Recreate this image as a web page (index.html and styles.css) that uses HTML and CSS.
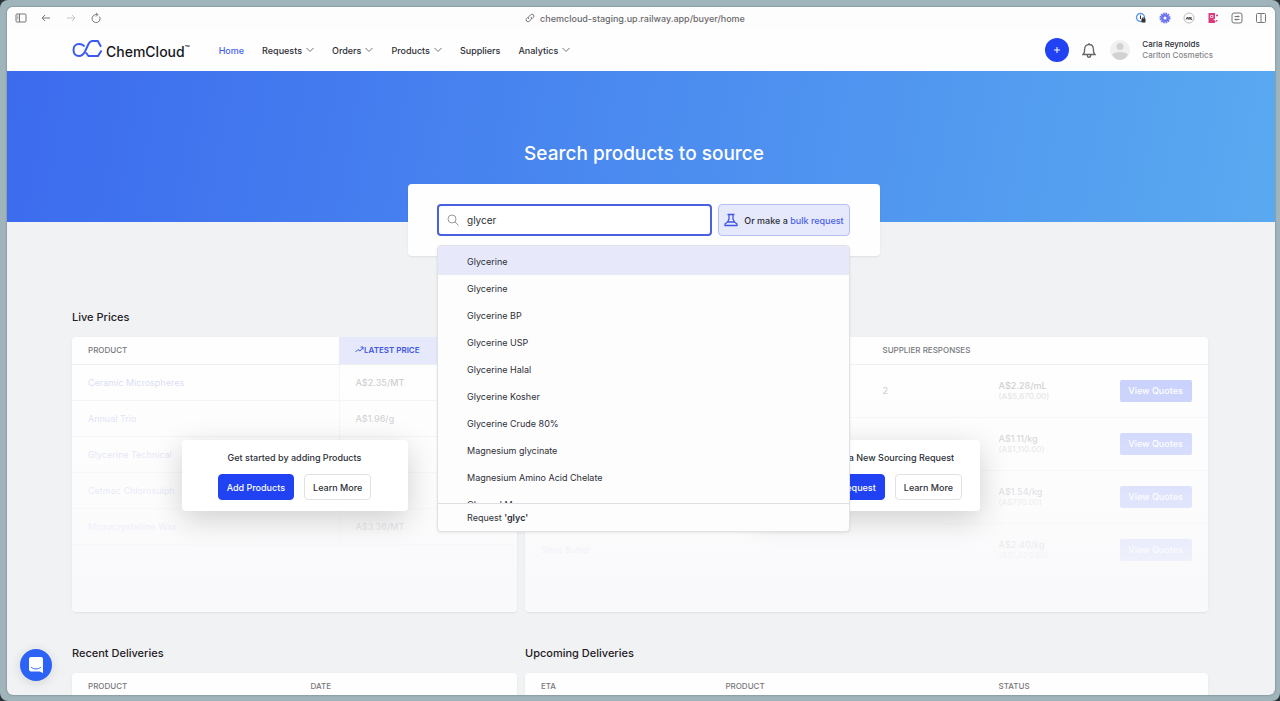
FILE: index.html
```html
<!DOCTYPE html>
<html lang="en">
<head>
    <meta charset="utf-8">
    <title>ChemCloud</title>
    <link rel="stylesheet" href="styles.css">
</head>
<body>
<div class="desktop">
<div class="window">

    <!-- Browser toolbar -->
    <div class="toolbar">
        <div class="toolbar-left">
            <button type="button" class="tool" aria-label="Sidebar"><svg width="12" height="12" viewBox="0 0 12 12"><rect x="1" y="2" width="10" height="8" rx="1"/><path d="M4.5 2v8M2.3 4h1M2.3 5.5h1M2.3 7h1"/></svg></button>
            <button type="button" class="tool" aria-label="Back"><svg width="12" height="12" viewBox="0 0 12 12"><path d="M10 6H2M5 3L2 6l3 3"/></svg></button>
            <button type="button" class="tool tool-off" aria-label="Forward"><svg width="12" height="12" viewBox="0 0 12 12"><path d="M2 6h8M7 3l3 3-3 3"/></svg></button>
            <button type="button" class="tool" aria-label="Reload"><svg width="12" height="12" viewBox="0 0 12 12"><path d="M9.6 4.7A4 4 0 1 1 6 2.6h1.6M6 .8l1.9 1.8L6 4.5"/></svg></button>
        </div>
        <div class="address">
            <svg width="10" height="10" viewBox="0 0 10 10"><path d="M4 6.200a2 2 0 0 1 0-2.800l1.600-1.600a1.900 1.900 0 0 1 2.700 2.700L7 5.800M6 3.800a2 2 0 0 1 0 2.800L4.400 8.200a1.900 1.900 0 0 1-2.700-2.700L3 4.200"/></svg>
            <span>chemcloud-staging.up.railway.app/buyer/home</span>
        </div>
        <div class="toolbar-right">
            <button type="button" class="tool" aria-label="Password manager"><svg width="12" height="12" viewBox="0 0 12 12"><circle cx="5.500" cy="5.500" r="4" stroke="#5b9be8" stroke-width="1.400"/><path d="M5.500 3.500v3.500" stroke="#333"/><rect x="6.500" y="7" width="4" height="3.500" fill="#333" stroke="none"/><path d="M7.400 7V6h2.200v1" stroke="#333"/></svg></button>
            <button type="button" class="tool" aria-label="Extension"><svg width="12" height="12" viewBox="0 0 12 12"><circle cx="6" cy="6" r="4.600" stroke="#6a74ee" stroke-width="1.800" stroke-dasharray="1.600 .8"/><circle cx="6" cy="6" r="2.800" stroke="#6a74ee" stroke-width="2.400"/></svg></button>
            <button type="button" class="tool" aria-label="Extension"><svg width="12" height="12" viewBox="0 0 12 12"><circle cx="6" cy="6" r="5" stroke="#bbb"/><path d="M3 7.500l1.300-2.500.8 2.500L6.200 5 7 7.500 8 5v2.500h1.200" stroke="#555"/></svg></button>
            <button type="button" class="tool" aria-label="Extension"><svg width="12" height="12" viewBox="0 0 12 12"><path d="M1.500 1h6.500v6H6l2 1.500V11H1.500z" fill="#d93b7c" stroke="none"/><path d="M3.500 3.500h2.500v2H3.500z" stroke="#f7c4da"/><path d="M9 3.500h2M8.500 9.500l1.800-1.300" stroke="#d93b7c" stroke-width="1.400"/></svg></button>
            <button type="button" class="tool" aria-label="Reader"><svg width="12" height="12" viewBox="0 0 12 12"><rect x="1" y="1" width="10" height="10" rx="2"/><path d="M3.500 4.500h5M3.500 7.500h5M7 3.500v2M5 6.500v2"/></svg></button>
            <button type="button" class="tool" aria-label="Split view"><svg width="12" height="12" viewBox="0 0 12 12"><rect x="1.500" y="1.500" width="9" height="9" rx="1"/><path d="M6 1.500v9"/></svg></button>
        </div>
    </div>

    <!-- Site header -->
    <header class="header">
        <a href="#" class="logo">
            <svg width="31" height="18" viewBox="0 0 31 18"><path d="M12.500 6.500C11 4.500 9.300 4 7 4 3.600 4 1.500 6.700 1.500 10s2.100 6 5.500 6c3 0 4.500-1.500 6-4.500L16.500 4C17.600 2 18.600 1 20.500 1h5.300L29 6.700M29.500 10.500L26 16H16.500L13.800 12.500"/></svg>
            <span class="logo-text">ChemCloud<sup>™</sup></span>
        </a>
        <nav class="nav">
            <a href="#" class="active">Home</a>
            <a href="#">Requests <svg width="8" height="6" viewBox="0 0 8 6"><path d="M.5 1L4 4.500 7.500 1"/></svg></a>
            <a href="#">Orders <svg width="8" height="6" viewBox="0 0 8 6"><path d="M.5 1L4 4.500 7.500 1"/></svg></a>
            <a href="#">Products <svg width="8" height="6" viewBox="0 0 8 6"><path d="M.5 1L4 4.500 7.500 1"/></svg></a>
            <a href="#">Suppliers</a>
            <a href="#">Analytics <svg width="8" height="6" viewBox="0 0 8 6"><path d="M.5 1L4 4.500 7.500 1"/></svg></a>
        </nav>
        <div class="account">
            <button type="button" class="add" aria-label="Add"><svg width="8" height="8" viewBox="0 0 8 8"><path d="M4 1v6M1 4h6"/></svg></button>
            <button type="button" class="bell" aria-label="Notifications"><svg width="14" height="17" viewBox="0 0 14 17"><path d="M7 1v1.500M1 12.500c1.400-1 1.600-2.500 1.600-5C2.600 4.300 4.500 2.500 7 2.500s4.400 1.800 4.400 5c0 2.500.2 4 1.600 5zM5.300 13c0 3 3.400 3 3.400 0"/></svg></button>
            <svg class="avatar" width="20" height="20" viewBox="0 0 20 20"><circle cx="10" cy="10" r="10" fill="#f1f1f2"/><circle cx="10" cy="6.500" r="3.500" fill="#d2d2d4"/><path d="M2 14.500C4 11 16 11 18 14.500 16.500 18 13.500 20 10 20s-6.500-2-8-5.500z" fill="#d2d2d4"/></svg>
            <div class="who">
                <div class="who-name">Carla Reynolds</div>
                <div class="who-company">Carlton Cosmetics</div>
            </div>
        </div>
    </header>

    <!-- Search -->
    <section class="hero">
        <h1>Search products to source</h1>
        <form class="search">
            <label class="search-field">
                <svg width="12" height="12" viewBox="0 0 12 12"><circle cx="5" cy="5" r="4"/><path d="M8 8l3.500 3.500"/></svg>
                <input type="text" value="glycer" aria-label="Search products" autofocus>
            </label>
            <button type="button" class="bulk">
                <svg width="14" height="14" viewBox="0 0 14 14"><path d="M3.500 1.500h7M5 1.500v4.500L3.500 9h7L9 6V1.500M3.500 9L1 11v1.500h12V11l-2.500-2"/></svg>
                <span>Or make a <b>bulk request</b></span>
            </button>
            <div class="dropdown">
                <ul>
                    <li class="selected">Glycerine</li>
                    <li>Glycerine</li>
                    <li>Glycerine BP</li>
                    <li>Glycerine USP</li>
                    <li>Glycerine Halal</li>
                    <li>Glycerine Kosher</li>
                    <li>Glycerine Crude 80%</li>
                    <li>Magnesium glycinate</li>
                    <li>Magnesium Amino Acid Chelate</li>
                    <li>Glycerol Mono</li>
                </ul>
                <button type="button" class="request">Request <b>'glyc'</b></button>
            </div>
        </form>
    </section>

    <!-- Dashboard -->
    <main class="board">
        <section>
            <h2>Live Prices</h2>
            <div class="card card-tall">
                <table class="prices">
                    <thead>
                        <tr>
                            <th class="col-60">Product</th>
                            <th class="latest"><svg width="9" height="7" viewBox="0 0 9 7"><path d="M.5 6L3 3.500l2 1.500 3-3.500M5.500 1H8v2.500"/></svg>Latest Price</th>
                        </tr>
                    </thead>
                    <tbody>
                        <tr><td><a href="#">Ceramic Microspheres</a></td><td>A$2.35/MT</td></tr>
                        <tr><td><a href="#">Annual Trio</a></td><td>A$1.96/g</td></tr>
                        <tr><td><a href="#">Glycerine Technical</a></td><td></td></tr>
                        <tr><td><a href="#">Cetmac Chlorosulph</a></td><td></td></tr>
                        <tr><td><a href="#">Microcrystalline Wax</a></td><td>A$3.36/MT</td></tr>
                    </tbody>
                </table>
                <div class="veil">
                    <div class="prompt">
                        <p>Get started by adding Products</p>
                        <div class="prompt-buttons">
                            <button type="button" class="btn btn-primary">Add Products</button>
                            <button type="button" class="btn">Learn More</button>
                        </div>
                    </div>
                </div>
            </div>
        </section>

        <section>
            <h2>Sourcing Requests</h2>
            <div class="card card-tall">
                <table class="requests">
                    <thead>
                        <tr>
                            <th class="col-18">Product</th>
                            <th class="col-32">Quantity</th>
                            <th class="col-17">Supplier Responses</th>
                            <th class="col-18"></th>
                            <th></th>
                        </tr>
                    </thead>
                    <tbody>
                        <tr><td><a href="#">Glycerine</a></td><td>2,500 mL</td><td>2</td><td>A$2.28/mL<small>(A$5,670.00)</small></td><td><button type="button" class="quotes">View Quotes</button></td></tr>
                        <tr><td><a href="#">Citric Acid</a></td><td>1,000 kg</td><td></td><td>A$1.11/kg<small>(A$1,110.00)</small></td><td><button type="button" class="quotes">View Quotes</button></td></tr>
                        <tr><td><a href="#">Xylitol</a></td><td>500 kg</td><td></td><td>A$1.54/kg<small>(A$770.00)</small></td><td><button type="button" class="quotes">View Quotes</button></td></tr>
                        <tr><td><a href="#">Shea Butter</a></td><td></td><td></td><td>A$2.40/kg<small>(A$1,920.00)</small></td><td><button type="button" class="quotes">View Quotes</button></td></tr>
                    </tbody>
                </table>
                <div class="veil">
                    <div class="prompt">
                        <p>Start by making a New Sourcing Request</p>
                        <div class="prompt-buttons">
                            <button type="button" class="btn btn-primary">Add Sourcing Request</button>
                            <button type="button" class="btn">Learn More</button>
                        </div>
                    </div>
                </div>
            </div>
        </section>

        <section>
            <h2>Recent Deliveries</h2>
            <div class="card">
                <table>
                    <thead>
                        <tr><th class="col-50">Product</th><th>Date</th></tr>
                    </thead>
                </table>
            </div>
        </section>

        <section>
            <h2>Upcoming Deliveries</h2>
            <div class="card">
                <table>
                    <thead>
                        <tr><th class="col-27">ETA</th><th class="col-40">Product</th><th>Status</th></tr>
                    </thead>
                </table>
            </div>
        </section>
    </main>

    <button type="button" class="chat" aria-label="Open chat"><svg width="16" height="18" viewBox="0 0 16 18"><path d="M3 1h10a2 2 0 0 1 2 2v14l-3.500-1.500H3a2 2 0 0 1-2-2V3a2 2 0 0 1 2-2z" fill="#fff"/><path d="M3.500 11.500c2.500 2 6.500 2 9 0" fill="none" stroke="#2c62f6" stroke-linecap="round"/></svg></button>
</div>
</div>
</body>
</html>
```
FILE: styles.css
```css
* {
    box-sizing: border-box;
}
body {
    margin: 0;
    background: #2b3236;
    font-family: Inter, "Liberation Sans", sans-serif;
    font-size: 9px;
    font-weight: 500;
    color: #2d2f36;
}
button,
input {
    font: inherit;
    color: inherit;
}
button {
    padding: 0;
    border: none;
    background: none;
    cursor: pointer;
}
a {
    color: inherit;
    text-decoration: none;
}
svg {
    display: block;
    flex: none;
    fill: none;
}
.desktop {
    height: 100vh;
    padding: 7px 5px 6px 7px;
    border-radius: 8px;
    background: #9fb4bb;
}
.window {
    position: relative;
    height: 100%;
    overflow: hidden;
    border-radius: 6px;
    background: #f1f2f4;
    box-shadow: 0 0 2px rgba(0, 0, 0, 0.4);
}

/* Browser toolbar */
.toolbar {
    display: grid;
    grid-template-columns: 1fr auto 1fr;
    align-items: center;
    height: 22px;
    padding: 0 8px;
    background: #fdfdfd;
}
.toolbar-left,
.toolbar-right,
.address {
    display: flex;
    align-items: center;
}
.toolbar-left {
    gap: 13px;
}
.toolbar-right {
    gap: 12px;
    justify-content: flex-end;
}
.address {
    gap: 5px;
    padding-right: 12px;
    color: #6a6a6c;
}
.tool svg,
.address svg {
    stroke: #77777a;
}
.tool-off {
    opacity: 0.4;
}

/* Header */
.header {
    display: flex;
    align-items: center;
    height: 42px;
    padding: 0 62px 0 65px;
    background: #fefefe;
}
.logo {
    display: flex;
    align-items: flex-start;
    gap: 3px;
    color: #17181c;
}
.logo svg {
    stroke: #3a5af0;
    stroke-width: 2;
}
.logo-text {
    padding-top: 4px;
    font-size: 14px;
    line-height: 16px;
}
.logo sup {
    font-size: 8px;
    line-height: 1;
}
.nav {
    display: flex;
    gap: 18px;
    margin-left: 29px;
}
.nav a {
    display: flex;
    align-items: center;
    gap: 4px;
}
.nav svg {
    stroke: #77777c;
}
.nav .active {
    color: #4763f0;
}
.account {
    display: flex;
    align-items: center;
    margin-left: auto;
}
.add {
    display: flex;
    align-items: center;
    justify-content: center;
    width: 24px;
    height: 24px;
    border-radius: 50%;
    background: #2042f2;
    stroke: #fff;
}
.bell {
    margin: 0 14px 0 13px;
    stroke: #66666a;
    stroke-width: 1.3;
}
.who {
    margin-left: 12px;
    font-size: 8px;
    line-height: 11px;
}
.who-company {
    color: #85868a;
}

/* Hero */
.hero {
    height: 151px;
    padding: 70px 0 0 6px;
    background: linear-gradient(100deg, #3c6bee, #4b8bf0 50%, #59a9f0);
}
h1 {
    margin: 0 0 17px;
    font-size: 19px;
    font-weight: 500;
    line-height: 26px;
    color: #fff;
    text-align: center;
}
.search {
    position: relative;
    display: flex;
    gap: 6px;
    width: 472px;
    margin: 0 auto;
    padding: 20px 30px 20px 29px;
    border-radius: 4px;
    background: #fefefe;
    box-shadow: 0 1px 2px rgba(0, 0, 0, 0.08);
}
.search-field {
    display: flex;
    flex: 1;
    align-items: center;
    gap: 8px;
    height: 32px;
    padding: 0 8px;
    border: 2px solid #4a60dc;
    border-radius: 4px;
    background: #fff;
}
.search-field svg {
    stroke: #9a9a9e;
}
.search-field input {
    flex: 1;
    min-width: 0;
    padding: 0;
    border: none;
    outline: none;
    background: none;
    font-size: 10px;
    font-weight: 400;
}
.bulk {
    display: flex;
    align-items: center;
    justify-content: center;
    gap: 6px;
    width: 132px;
    border: 1px solid #b6bff5;
    border-radius: 4px;
    background: #e6e9fc;
    white-space: nowrap;
}
.bulk svg {
    stroke: #3f56e4;
    stroke-width: 1.3;
}
.bulk b {
    font-weight: 500;
    color: #4a5fe8;
}
.dropdown {
    position: absolute;
    z-index: 2;
    top: 61px;
    left: 29px;
    right: 30px;
    overflow: hidden;
    border: 1px solid #e2e2e6;
    border-radius: 4px;
    background: #fdfdfe;
    box-shadow: 0 1px 3px rgba(0, 0, 0, 0.08);
    font-weight: 400;
}
.dropdown ul {
    height: 257px;
    margin: 0;
    padding: 0;
    overflow: hidden;
    list-style: none;
}
.dropdown li {
    padding: 0 29px;
    line-height: 27px;
}
.dropdown .selected {
    padding-top: 2px;
    background: #e7e9fb;
}
.request {
    display: block;
    width: 100%;
    padding: 0 29px;
    border-top: 1px solid #e0e0e4;
    line-height: 27px;
    text-align: left;
}
.request b {
    font-weight: 600;
}

/* Dashboard */
.board {
    display: grid;
    grid-template-columns: 445fr 683fr;
    gap: 33px 8px;
    padding: 87px 67px 0 65px;
}
h2 {
    margin: 0 0 12px;
    font-size: 11px;
    font-weight: 500;
    line-height: 16px;
    color: #1f2025;
}
.card {
    position: relative;
    overflow: hidden;
    border-radius: 4px;
    background: #fefefe;
    box-shadow: 0 1px 2px rgba(0, 0, 0, 0.08);
}
.card-tall {
    height: 275px;
}
table {
    width: 100%;
    table-layout: fixed;
    border-collapse: collapse;
}
th {
    height: 27px;
    padding: 0 0 0 16px;
    border-bottom: 1px solid #efeff2;
    font-size: 8px;
    font-weight: 500;
    color: #77787d;
    text-align: left;
    text-transform: uppercase;
    white-space: nowrap;
}
td {
    padding: 0 16px;
    border-bottom: 1px solid #d8d8de;
}
td a {
    color: #6672cc;
    font-weight: 400;
}
.latest {
    background: #e6e9fc;
    color: #3f56e0;
    font-weight: 600;
}
.latest svg {
    display: inline;
    stroke: #3f56e0;
}
.prices td {
    height: 36px;
}
.prices td + td {
    border-left: 1px dotted #b8b8c0;
}
.requests td {
    height: 53px;
}
.requests small {
    display: block;
    font-size: 8px;
    color: #8a8a90;
}
.requests tr:last-child td {
    border-bottom: none;
}
.col-17 { width: 17%; }
.col-18 { width: 18%; }
.col-27 { width: 27%; }
.col-32 { width: 32%; }
.col-40 { width: 40%; }
.col-50 { width: 50%; }
.col-60 { width: 60%; }
.quotes {
    width: 72px;
    height: 22px;
    margin-left: -2px;
    border-radius: 2px;
    background: #2343f5;
    color: #fff;
}

/* Fades out the sample rows behind the prompt */
.veil {
    position: absolute;
    inset: 28px 0 0;
    display: flex;
    align-items: center;
    justify-content: center;
    padding-bottom: 26px;
    background: linear-gradient(rgba(254, 254, 254, 0.75), rgba(252, 252, 253, 0.87) 55%, rgba(249, 249, 251, 0.97) 85%);
}
.prompt {
    width: 226px;
    padding: 11px 0;
    border-radius: 4px;
    background: #fff;
    box-shadow: 0 8px 30px rgba(0, 0, 0, 0.18);
    text-align: center;
}
.prompt p {
    margin: 0 0 10px;
    line-height: 13px;
}
.prompt-buttons {
    display: flex;
    justify-content: center;
    gap: 10px;
}
.btn {
    height: 26px;
    padding: 0 8px;
    border: 1px solid #e2e2e6;
    border-radius: 4px;
    background: #fff;
}
.btn-primary {
    border-color: #2042f2;
    background: #2042f2;
    color: #fff;
}

.chat {
    position: absolute;
    bottom: 14px;
    left: 13px;
    display: flex;
    align-items: center;
    justify-content: center;
    width: 32px;
    height: 32px;
    border-radius: 50%;
    background: #2c62f6;
    box-shadow: 0 2px 12px rgba(0, 0, 0, 0.12);
}
```
